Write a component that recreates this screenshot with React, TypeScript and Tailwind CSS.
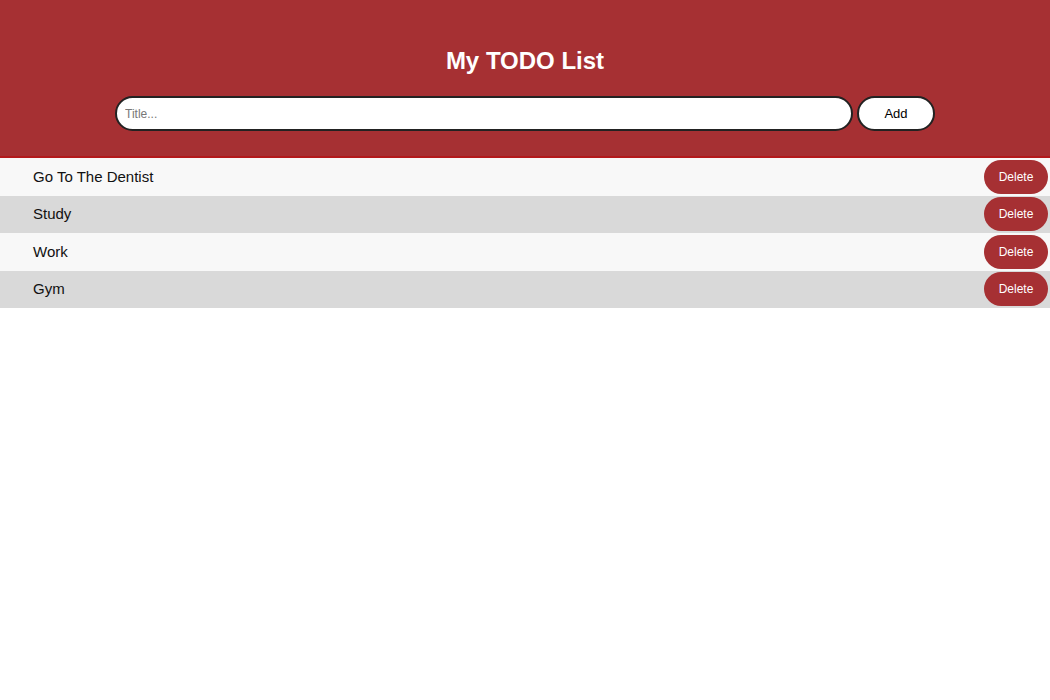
import React, { useState } from 'react';

const App: React.FC = () => {
  const [todos] = useState<string[]>(['Go To The Dentist', 'Study', 'Work', 'Gym']);

  return (
    <div className="min-h-screen bg-white font-['Liberation_Sans',Arial,sans-serif]">
      {/* Header */}
      <div className="h-[158px] bg-[#a63033] border-b-2 border-[#b3191c] flex flex-col items-center">
        <h1 className="mt-[46px] text-[24px] leading-[30px] font-bold text-white">My TODO List</h1>
        <div className="mt-[20px] w-[820px] flex gap-[4px]">
          <input
            className="w-[738px] h-[35px] rounded-full bg-white border-2 border-[#222] px-[8px] text-[12px] outline-none placeholder:text-[#777]"
            placeholder="Title..."
          />
          <button className="w-[78px] h-[35px] rounded-full bg-white border-2 border-[#222] text-[13px] text-black">
            Add
          </button>
        </div>
      </div>

      {/* List */}
      <div className="flex flex-col">
        {todos.map((t, i) => (
          <div
            key={t}
            className={`h-[37.5px] flex items-center justify-between pl-[33px] pr-[2px] ${
              i % 2 === 0 ? 'bg-[#f8f8f8]' : 'bg-[#d9d9d9]'
            }`}
          >
            <span className="text-[15px] text-[#111]">{t}</span>
            <button className="w-[64px] h-[34px] rounded-full bg-[#a63033] text-white text-[12px]">
              Delete
            </button>
          </div>
        ))}
      </div>
    </div>
  );
};

export default App;
